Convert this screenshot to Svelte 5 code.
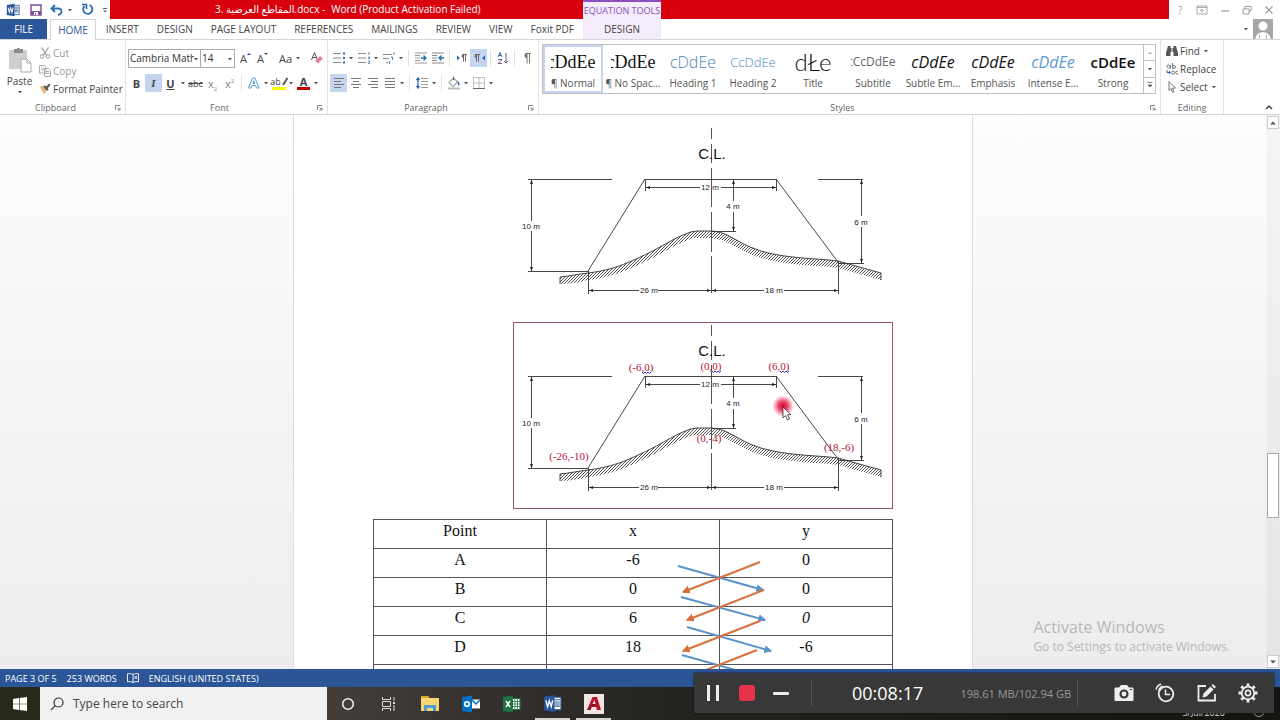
<script>
	let font = $state('Cambria Math');
	let size = $state('14');
	let query = $state('');

	const tabs = ['INSERT', 'DESIGN', 'PAGE LAYOUT', 'REFERENCES', 'MAILINGS', 'REVIEW', 'VIEW', 'Foxit PDF'];

	const styles = [
		{ name: '¶ Normal', sample: 'cDdEe', look: 'serif' },
		{ name: '¶ No Spac...', sample: 'cDdEe', look: 'serif' },
		{ name: 'Heading 1', sample: 'cDdEe', look: 'h1' },
		{ name: 'Heading 2', sample: 'CcDdEe', look: 'h2' },
		{ name: 'Title', sample: 'dŁe', look: 'huge' },
		{ name: 'Subtitle', sample: 'cCcDdEe', look: 'subtitle' },
		{ name: 'Subtle Em...', sample: 'cDdEe', look: 'subtle' },
		{ name: 'Emphasis', sample: 'cDdEe', look: 'emphasis' },
		{ name: 'Intense E...', sample: 'cDdEe', look: 'intense' },
		{ name: 'Strong', sample: 'cDdEe', look: 'strong' }
	];
	let picked = $state(0);

	const points = [
		{ name: 'A', x: '-6', y: '0' },
		{ name: 'B', x: '0', y: '0' },
		{ name: 'C', x: '6', y: '0', slanted: true },
		{ name: 'D', x: '18', y: '-6' },
		{ name: 'E', x: '0', y: '-4' }
	];

	const coords = [
		{ text: '(-6,0)', x: 128, y: 49, wavy: true },
		{ text: '(0,0)', x: 198, y: 48, wavy: true },
		{ text: '(6,0)', x: 266, y: 48, wavy: true },
		{ text: '(-26,-10)', x: 56, y: 138 },
		{ text: '(18,-6)', x: 326, y: 129 },
		{ text: '(0,-4)', x: 196, y: 120 }
	];

	// cross multiplication arrows, over the table
	const down = [[305, 47, 390, 71], [308, 78, 392, 101], [314, 108, 398, 132], [309, 136, 394, 160]];
	const up = [[387, 43, 310, 73], [391, 71, 314, 101], [387, 102, 310, 132], [384, 131, 310, 160]];

	const ground = 'C57 151 66 149 75 148 C92 146 104 142 114 138 C128 132 138 127 147 122 C156 117 165 112 170 110 Q178 106 184 106 L199 106 C206 107 210 108 214 110 C222 114 230 119 237 122 Q249 127 260 129 Q270 131 280 132 C296 134 310 134 325 136 Q346 142 368 148';
	const band = 'M47 152 ' + ground + ' L368 155 Q346 149 325 143 C310 141 296 141 280 139 Q270 138 260 136 Q249 134 237 129 C230 126 222 121 214 117 C210 115 206 114 199 113 L184 113 Q178 113 170 117 C165 119 156 124 147 129 C138 134 128 139 114 145 C104 149 92 153 75 155 Q60 159 47 159 Z';
</script>

{#snippet caret()}
	<svg class="caret" viewBox="0 0 8 6" width="8" height="6"><path d="M2 2h4L4 4.4z" fill="#555" /></svg>
{/snippet}

{#snippet launcher()}
	<button class="launcher" aria-label="More options">
		<svg viewBox="0 0 6 6" width="6" height="6"><path d="M.5 5V.5H5M2.5 2.5l2 2M5 2.5V5H2.5" fill="none" stroke="#666" stroke-width=".8" /></svg>
	</button>
{/snippet}

{#snippet lines(d)}
	<svg viewBox="0 0 12 12" width="12" height="12"><path {d} stroke="#777" fill="none" /></svg>
{/snippet}

{#snippet wordLogo(dim)}
	<svg viewBox="0 0 18 18" width={dim} height={dim}>
		<path d="M9 3h8v12H9z" fill="#fff" stroke="#2b579a" />
		<path d="M11 5.5h5M11 7.5h5M11 9.5h5M11 11.5h5" stroke="#2b579a" />
		<path d="M1 2.5L11 1v16L1 15.500z" fill="#2b579a" />
		<path d="M2.800 6l1.500 6L6 6.500 7.700 12l1.500-6" fill="none" stroke="#fff" stroke-width="1.300" />
	</svg>
{/snippet}

{#snippet section()}
	<path d={band} fill="url(#hatch)" />
	<path class="ink" d={'M47 159V152 ' + ground + 'V155'} />
	<path class="axis" d="M198.500 3V14M198.500 19V38M198.500 43V82M198.500 87V127M198.500 131V168" />
	<path class="ink" d="M132 54.500H263M132 54L75 146M263 54L325 137M15 54.500H99M305 54.500H350M15 146.500H75M325 138.500H351M198 106.500H223" />
	<path class="ink" d="M132.500 54V66M263.500 54V66M75.500 146V169M325.500 137V169" />
	<path class="ink" d="M133 62.500H187M208 62.500H263M220.500 55V76M220.500 87V106M18.500 55V96M18.500 106V146M348.500 55V91M348.500 102V138M76 165.500H126M145 165.500H251M271 165.500H325" />
	<path class="tip" d="M133 62.500l4-1.500v3zM263 62.500l-4-1.500v3zM220.500 55l-1.500 4h3zM220.500 106l-1.500-4h3zM18.500 55l-1.500 4h3zM18.500 146l-1.500-4h3zM348.500 55l-1.500 4h3zM348.500 138l-1.500-4h3zM76 165.500l4-1.500v3zM325 165.500l-4-1.500v3zM198 165.500l-4-1.500v3zM199 165.500l4-1.500v3z" />
	<text class="cl" x="199" y="34">C.L.</text>
	<g class="dim">
		<text x="197" y="65">12 m</text>
		<text x="220" y="84">4 m</text>
		<text x="18" y="104">10 m</text>
		<text x="348" y="100">6 m</text>
		<text x="136" y="168">26 m</text>
		<text x="261" y="168">18 m</text>
	</g>
{/snippet}

<div class="app">
	<header class="titlebar">
		<div class="quick">
			<span class="slot">{@render wordLogo(14)}</span>
			<button class="slot" aria-label="Save">
				<svg viewBox="0 0 12 12" width="12" height="12"><path d="M1 1h10v10H1z" fill="#fff" stroke="#80519f" stroke-width="1.500" /><path d="M1 7h10v4H1z" fill="#80519f" /><path d="M4 8h4v3H4z" fill="#fff" /><path d="M5 9h1v2H5z" fill="#80519f" /></svg>
			</button>
			<button class="slot wide" aria-label="Undo">
				<svg viewBox="0 0 14 12" width="14" height="12"><path d="M5 1L1.500 4.500 5 8M2 4.500h6c5 0 4.500 6 0 6.500" fill="none" stroke="#2b6cb0" stroke-width="1.800" /></svg>
				{@render caret()}
			</button>
			<button class="slot" aria-label="Repeat">
				<svg viewBox="0 0 13 13" width="13" height="13"><path d="M3.500 3A4.600 4.600 0 1 0 8.500 2" fill="none" stroke="#2b6cb0" stroke-width="1.800" /><path d="M1 1.500h4.500V6" fill="none" stroke="#2b6cb0" stroke-width="1.600" /></svg>
			</button>
			<button class="slot end" aria-label="Customize toolbar">
				<svg viewBox="0 0 8 8" width="8" height="8"><path d="M2 2h4v1H2zM2 4.500h4L4 6.500z" fill="#666" /></svg>
			</button>
		</div>
		<div class="title"><span>3. <bdi>المقاطع العرضية</bdi>.docx -</span><span>Word (Product Activation Failed)</span></div>
		<div class="tools-title">EQUATION TOOLS</div>
		<div class="title-rest"></div>
		<div class="window-buttons">
			<button aria-label="Help">?</button>
			<button aria-label="Ribbon display options"><svg viewBox="0 0 12 10" width="12" height="10"><path d="M1 1h10v8H1zM1 2.500h10M6 8V4M4 6l2-2 2 2" fill="none" stroke="#aaa" /></svg></button>
			<button aria-label="Minimize"><svg viewBox="0 0 10 10" width="10" height="10"><path d="M1 6h8" stroke="#999" stroke-width="1.200" /></svg></button>
			<button aria-label="Restore"><svg viewBox="0 0 10 10" width="10" height="10"><path d="M1 4h6v5H1zM3 4V1.500h6V6H7" fill="none" stroke="#999" /></svg></button>
			<button aria-label="Close"><svg viewBox="0 0 10 10" width="10" height="10"><path d="M1.500 1.500l7 7M8.500 1.500l-7 7" stroke="#999" stroke-width="1.200" /></svg></button>
		</div>
	</header>

	<nav class="tabs">
		<div class="tab-list">
			<button class="file">FILE</button>
			<button class="home">HOME</button>
			{#each tabs as tab}
				<button class="tab">{tab}</button>
			{/each}
		</div>
		<button class="tools-tab">DESIGN</button>
		<div class="account">
			{@render caret()}
			<svg viewBox="0 0 20 20" width="20" height="20"><path d="M0 0h20v20H0z" fill="#a6a6a6" /><circle cx="10" cy="7" r="4.500" fill="#fff" /><path d="M2.500 20c0-9 15-9 15 0z" fill="#fff" /><path d="M6.500 20v-4M13.500 20v-4" stroke="#a6a6a6" stroke-width=".8" /></svg>
		</div>
	</nav>

	<section class="ribbon">
		<div class="group clipboard">
			<div class="clip-body">
				<button class="paste">
					<svg viewBox="0 0 24 26" width="24" height="26"><path d="M1 3h18v19H1z" fill="#cfcfcf" /><path d="M6 2h2.500a2 2 0 0 1 3.500 0H15v4H6z" fill="#8c8c8c" /><path d="M13 12h6l4 4v9H13z" fill="#fff" stroke="#aaa" /><path d="M19 12v4h4" fill="none" stroke="#aaa" /></svg>
					<span>Paste</span>
					{@render caret()}
				</button>
				<div class="clip-list">
					<button class="off"><svg viewBox="0 0 12 12" width="12" height="12"><path d="M2.500.5l5 7.500M9.500.5l-5 7.500" stroke="#999" stroke-width="1.300" /><circle cx="3" cy="9.500" r="1.800" fill="none" stroke="#999" /><circle cx="9" cy="9.500" r="1.800" fill="none" stroke="#999" /></svg>Cut</button>
					<button class="off"><svg viewBox="0 0 12 12" width="12" height="12"><path d="M.5.5h5l1.500 2V8H.5zM5.500 3.500h4l2 2v6h-6z" fill="#fff" stroke="#aaa" /><path d="M2 3h3M2 5h3M7 6.500h3M7 8.500h3" stroke="#aaa" /></svg>Copy</button>
					<button><svg viewBox="0 0 12 12" width="12" height="12"><path d="M1 4l4-2 3 5-3 4z" fill="#e8b073" /><path d="M4.500 3.500L8 8l1.500-1.500-3-4z" fill="#555" /><path d="M7 4l3-3.500 1.500 1.500-3 3.500z" fill="#555" /></svg>Format Painter</button>
				</div>
			</div>
			<footer>Clipboard{@render launcher()}</footer>
		</div>

		<div class="group font">
			<div class="row">
				<label class="combo name"><select bind:value={font} aria-label="Font"><option>Cambria Math</option><option>Calibri</option></select>{@render caret()}</label>
				<label class="combo size"><select bind:value={size} aria-label="Font size"><option>12</option><option>14</option></select>{@render caret()}</label>
				<button class="tool grow" aria-label="Grow font">A<svg viewBox="0 0 4 4" width="4" height="4"><path d="M0 3l2-2 2 2z" fill="#2b579a" /></svg></button>
				<button class="tool grow" aria-label="Shrink font">A<svg viewBox="0 0 4 4" width="4" height="4"><path d="M0 1l2 2 2-2z" fill="#2b579a" /></svg></button>
				<i class="sep"></i>
				<button class="tool">Aa</button>{@render caret()}
				<i class="sep"></i>
				<button class="tool" aria-label="Clear formatting"><svg viewBox="0 0 14 14" width="14" height="14"><path d="M1.500 9L4.500 1.500 7.500 9M2.500 6.500h4" fill="none" stroke="#555" /><path d="M5 10l5-5 3 2.500-5 5z" fill="#e5839b" /></svg></button>
			</div>
			<div class="row">
				<button class="tool"><b>B</b></button>
				<button class="tool on"><b class="it">I</b></button>
				<button class="tool"><b class="un">U</b></button>{@render caret()}
				<button class="tool strike">abc</button>
				<button class="tool pale"><span>x<sub>2</sub></span></button>
				<button class="tool pale"><span>x<sup>2</sup></span></button>
				<i class="sep"></i>
				<button class="tool" aria-label="Text effects"><svg viewBox="0 0 14 14" width="14" height="14"><path d="M1.500 12L5.500 2h2.500l4 10H9.500l-1-2.500h-3.500L4 12zM5.800 7.500h2L6.800 4.700z" fill="#fff" stroke="#5b9bd5" /></svg></button>{@render caret()}
				<button class="tool swatch yellow" aria-label="Highlight"><span>ab</span><svg viewBox="0 0 7 10" width="7" height="10"><path d="M6.500 1L2 8" stroke="#555" stroke-width="2" /></svg></button>{@render caret()}
				<button class="tool swatch red" aria-label="Font colour"><b>A</b></button>{@render caret()}
			</div>
			<footer>Font{@render launcher()}</footer>
		</div>

		<div class="group paragraph">
			<div class="row">
				<button class="tool" aria-label="Bullets"><svg viewBox="0 0 12 12" width="12" height="12"><path d="M0 1.500h8M0 6h8M0 10.500h8" stroke="#888" /><path d="M10 .5h2v2h-2zM10 5h2v2h-2zM10 9.500h2v2h-2z" fill="#2b6cb0" /></svg></button>{@render caret()}
				<button class="tool" aria-label="Numbering"><svg viewBox="0 0 12 12" width="12" height="12"><path d="M0 1.500h8M0 6h8M0 10.500h8" stroke="#888" /><path d="M11 0v3M10 5h1.500v1.500H10M10 9h1.500v2.500H10" fill="none" stroke="#2b6cb0" stroke-width=".8" /></svg></button>{@render caret()}
				<button class="tool" aria-label="Multilevel list"><svg viewBox="0 0 12 12" width="12" height="12"><path d="M0 2.500h9M0 6.500h6M3 10.500h2" stroke="#888" /><path d="M11 0v3M8 5h1.500v3M6.500 9v3" fill="none" stroke="#2b6cb0" stroke-width=".8" /></svg></button>{@render caret()}
				<i class="sep"></i>
				<button class="tool" aria-label="Decrease indent"><svg viewBox="0 0 12 12" width="12" height="12"><path d="M0 1h12M0 11h12M0 3.500h5M0 6h5M0 8.500h5" stroke="#999" /><path d="M6 6h5M8.500 3.500L11 6 8.500 8.500" fill="none" stroke="#2b6cb0" stroke-width="1.300" /></svg></button>
				<button class="tool" aria-label="Increase indent"><svg viewBox="0 0 12 12" width="12" height="12"><path d="M0 1h12M0 11h12M0 3.500h5M0 6h5M0 8.500h5" stroke="#888" /><path d="M7 6h5M9.500 3.500L7 6l2.500 2.500" fill="none" stroke="#2b6cb0" stroke-width="1.300" /></svg></button>
				<i class="sep"></i>
				<button class="tool" aria-label="Left to right"><svg viewBox="0 0 12 12" width="12" height="12"><path d="M1 3.500l3 2.500-3 2.500z" fill="#2b6cb0" /><path d="M7 2.500h4M7.500 2.500v7M9.500 2.500v7" stroke="#666" fill="none" /><path d="M7.500 2a2 2 0 0 0 0 4z" fill="#666" /></svg></button>
				<button class="tool on" aria-label="Right to left"><svg viewBox="0 0 12 12" width="12" height="12"><path d="M12 3.500L9 6l3 2.500z" fill="#2b6cb0" /><path d="M3 2.500h4M3.500 2.500v7M5.500 2.500v7" stroke="#666" fill="none" /><path d="M3.500 2a2 2 0 0 0 0 4z" fill="#666" /></svg></button>
				<i class="sep"></i>
				<button class="tool" aria-label="Sort"><svg viewBox="0 0 12 12" width="12" height="12"><path d="M1 5L3 .5 5 5M1.700 3.500h2.600" fill="none" stroke="#2b6cb0" /><path d="M1 7.500h4L1 11.500h4" fill="none" stroke="#80519f" /><path d="M9 1v10M7 9l2 2 2-2" fill="none" stroke="#666" /></svg></button>
				<i class="sep"></i>
				<button class="tool" aria-label="Show marks"><svg viewBox="0 0 12 12" width="12" height="12"><path d="M4.500 1.500H10M6 1.500v10M8.500 1.500v10" stroke="#777" fill="none" /><path d="M6 1a2.500 2.500 0 0 0 0 5z" fill="#777" /></svg></button>
			</div>
			<div class="row">
				<button class="tool on" aria-label="Align left">{@render lines('M1 1.500h10M1 4.500h7M1 7.500h10M1 10.500h7')}</button>
				<button class="tool" aria-label="Center">{@render lines('M1 1.500h10M3 4.500h6M1 7.500h10M3 10.500h6')}</button>
				<button class="tool" aria-label="Align right">{@render lines('M1 1.500h10M4 4.500h7M1 7.500h10M4 10.500h7')}</button>
				<button class="tool" aria-label="Justify">{@render lines('M1 1.500h10M1 4.500h10M1 7.500h10M1 10.500h10')}</button>{@render caret()}
				<i class="sep"></i>
				<button class="tool" aria-label="Line spacing"><svg viewBox="0 0 12 12" width="12" height="12"><path d="M5 1.500h7M5 4.500h7M5 7.500h7M5 10.500h7" stroke="#999" /><path d="M2 1v10M.5 3L2 1l1.500 2M.5 9L2 11l1.500-2" stroke="#2b6cb0" stroke-width="1.300" fill="none" /></svg></button>{@render caret()}
				<i class="sep"></i>
				<button class="tool" aria-label="Shading"><svg viewBox="0 0 14 14" width="14" height="14"><path d="M2 6.500L6.500 2l4 4L6 10.500z" fill="#fff" stroke="#666" /><path d="M6.500 4V.5" stroke="#666" /><path d="M10.500 5c2 1 2.500 3 1.500 5-1-1-1.500-2.500-1.500-5z" fill="#2b6cb0" /><path d="M1 11.500h12v2H1z" fill="#bbb" /></svg></button>{@render caret()}
				<button class="tool" aria-label="Borders"><svg viewBox="0 0 12 12" width="12" height="12"><path d="M.5.5h11v11H.5zM6 .5v11M.5 6h11" fill="none" stroke="#888" stroke-dasharray="1 1" /><path d="M0 11.500h12" stroke="#666" /></svg></button>{@render caret()}
			</div>
			<footer>Paragraph{@render launcher()}</footer>
		</div>

		<div class="group styles">
			<div class="gallery">
				{#each styles as style, i}
					<button class="style" class:picked={picked === i} onclick={() => (picked = i)}>
						<span class="sample {style.look}">{style.sample}</span>
						<span class="style-name">{style.name}</span>
					</button>
				{/each}
				<div class="gallery-scroll">
					<button aria-label="Previous styles"><svg viewBox="0 0 8 6" width="8" height="6"><path d="M2 4h4L4 2z" fill="#aaa" /></svg></button>
					<button aria-label="Next styles">{@render caret()}</button>
					<button aria-label="All styles"><svg viewBox="0 0 8 8" width="8" height="8"><path d="M1.500 1.500h5M2 4l2 2 2-2z" fill="#555" stroke="#666" stroke-width=".8" /></svg></button>
				</div>
			</div>
			<footer>Styles{@render launcher()}</footer>
		</div>

		<div class="group editing">
			<div class="edit-list">
				<button><svg viewBox="0 0 12 12" width="12" height="12"><path d="M2 1h2.500v2H7.500V1H10l2 7v3H7.500V7h-3v4H0V8z" fill="#555" /><path d="M6 3v4" stroke="#fff" /></svg>Find{@render caret()}</button>
				<button><svg viewBox="0 0 12 12" width="12" height="12"><circle cx="2.500" cy="3.500" r="1.500" fill="none" stroke="#777" /><path d="M4.500 2v3.500M6.500 0v5.500" stroke="#777" /><circle cx="8" cy="4" r="1.500" fill="none" stroke="#777" /><path d="M1 7v2.500h3M3 8l1.500 1.500L3 11" fill="none" stroke="#2b6cb0" /><circle cx="7" cy="9.500" r="1.500" fill="none" stroke="#777" /><path d="M12 8.300a1.500 1.500 0 1 0 0 2.400" fill="none" stroke="#777" /></svg>Replace</button>
				<button><svg viewBox="0 0 12 12" width="12" height="12"><path d="M3 .5v9l2-2 1.500 4 1.500-.6-1.500-3.800H9.500z" fill="#fff" stroke="#777" /></svg>Select{@render caret()}</button>
			</div>
			<footer>Editing</footer>
		</div>
		<button class="collapse" aria-label="Collapse the ribbon"><svg viewBox="0 0 8 6" width="8" height="6"><path d="M1 5l3-3 3 3" fill="none" stroke="#444" stroke-width="1.500" /></svg></button>
	</section>

	<main class="workspace">
		<div class="desk">
			<article class="page">
				<svg class="figure" viewBox="0 0 380 187" role="img" aria-label="Cross section">
					<defs>
						<pattern id="hatch" width="3" height="3" patternUnits="userSpaceOnUse"><path d="M-1 4L4-1M-1 1L1-1M2 4L4 2" stroke="#222" stroke-width=".8" /></pattern>
					</defs>
					{@render section()}
				</svg>
				<div class="framed">
					<svg class="figure" viewBox="0 0 380 187" role="img" aria-label="Cross section with coordinates">
						{@render section()}
						{#each coords as c}
							<text class="coord" x={c.x} y={c.y}>{c.text}</text>
							{#if c.wavy}
								<path d="M{c.x + 1} {c.y + 1}l1.500 1.500 1.500-1.500 1.500 1.500 1.500-1.500 1.500 1.500 1.500-1.500" fill="none" stroke="#33c" />
							{/if}
						{/each}
					</svg>
					<svg class="pointer" viewBox="0 0 24 32" width="24" height="32">
						<defs>
							<radialGradient id="glow"><stop offset="0" stop-color="#d8002f" /><stop offset=".45" stop-color="#e4123f" stop-opacity=".75" /><stop offset="1" stop-color="#f04070" stop-opacity="0" /></radialGradient>
						</defs>
						<circle cx="11" cy="11" r="11" fill="url(#glow)" />
						<path d="M11 12v11l2.500-2.500 2 4.500 2-1-2-4.300H19z" fill="#fff" stroke="#333" stroke-width=".8" />
					</svg>
				</div>
				<div class="table-wrap">
					<table>
						<thead><tr><th>Point</th><th>x</th><th>y</th></tr></thead>
						<tbody>
							{#each points as p}
								<tr><td>{p.name}</td><td>{p.x}</td><td class:slanted={p.slanted}>{p.y}</td></tr>
							{/each}
						</tbody>
					</table>
					<svg class="arrows" viewBox="0 0 520 175" width="520" height="175">
						<defs>
							<marker id="blue" viewBox="0 0 6 6" refX="5" refY="3" markerWidth="4" markerHeight="4" orient="auto"><path d="M0 0l6 3-6 3z" fill="#5b93c9" /></marker>
							<marker id="orange" viewBox="0 0 6 6" refX="5" refY="3" markerWidth="4" markerHeight="4" orient="auto"><path d="M0 0l6 3-6 3z" fill="#d9703a" /></marker>
						</defs>
						{#each down as [x1, y1, x2, y2]}
							<line {x1} {y1} {x2} {y2} stroke="#5b93c9" stroke-width="2" marker-end="url(#blue)" />
						{/each}
						{#each up as [x1, y1, x2, y2]}
							<line {x1} {y1} {x2} {y2} stroke="#d9703a" stroke-width="2" marker-end="url(#orange)" />
						{/each}
					</svg>
				</div>
			</article>
			<div class="watermark">
				<p class="big">Activate Windows</p>
				<p>Go to Settings to activate Windows.</p>
			</div>
		</div>
		<div class="scrollbar">
			<button aria-label="Scroll up"><svg viewBox="0 0 8 6" width="8" height="6"><path d="M1 4.500h6L4 1.500z" fill="#555" /></svg></button>
			<div class="above"></div>
			<div class="thumb"></div>
			<div class="below"></div>
			<button aria-label="Scroll down"><svg viewBox="0 0 8 6" width="8" height="6"><path d="M1 1.500h6L4 4.500z" fill="#555" /></svg></button>
		</div>
	</main>

	<div class="status">
		<span>PAGE 3 OF 5</span>
		<span>253 WORDS</span>
		<svg viewBox="0 0 12 10" width="12" height="10"><path d="M6 1.500C4 .5 2.500.5.500.8v8c2-.3 3.500-.3 5.500.7 2-1 3.500-1 5.500-.7v-8C9.500.5 8 .5 6 1.500zM6 1.500v8M7.500 3l2.500 3M10 3L7.500 6" fill="none" stroke="#fff" stroke-width=".9" /></svg>
		<span>ENGLISH (UNITED STATES)</span>
	</div>

	<div class="taskbar">
		<button class="start" aria-label="Start"><svg viewBox="0 0 14 14" width="14" height="14"><path d="M0 2l6-.9v5.600H0zM6.600 1L14 0v6.700H6.600zM0 7.300h6v5.600L0 12zM6.600 7.300H14V14l-7.400-1z" fill="#fff" /></svg></button>
		<label class="search">
			<svg viewBox="0 0 14 14" width="14" height="14"><circle cx="8.500" cy="5.500" r="4.500" fill="none" stroke="#333" stroke-width="1.200" /><path d="M5.300 8.700L.8 13.200" stroke="#333" stroke-width="1.200" /></svg>
			<input bind:value={query} placeholder="Type here to search" aria-label="Search" />
		</label>
		<button class="task" aria-label="Cortana"><svg viewBox="0 0 14 14" width="14" height="14"><circle cx="7" cy="7" r="5.300" fill="none" stroke="#eee" stroke-width="1.600" /></svg></button>
		<button class="task" aria-label="Task view"><svg viewBox="0 0 16 14" width="16" height="14"><path d="M1.500 0v2.500h8V0M1.500 14v-2.500h8V14M1.500 4.500h8v5h-8zM13 0v4M13 8v6" fill="none" stroke="#ddd" /><path d="M12 5h2v2h-2z" fill="#ddd" /></svg></button>
		<button class="task" aria-label="File Explorer"><svg viewBox="0 0 18 16" width="18" height="16"><path d="M0 0h7l1.500 2H18v13H0z" fill="#f7d774" /><path d="M0 0h7l1.500 2H0z" fill="#d9a428" /><path d="M3 15V9h12v6h-3v-3H6v3z" fill="#4b9cd3" /></svg></button>
		<button class="task" aria-label="Outlook"><svg viewBox="0 0 18 18" width="18" height="18"><path d="M9 4.500h9v9H9z" fill="#fff" /><path d="M10 5l4 4 4-4" fill="none" stroke="#0072c6" stroke-width="1.500" /><path d="M0 2l10-1.500v17L0 16z" fill="#0072c6" /><circle cx="5" cy="9" r="2.300" fill="none" stroke="#fff" stroke-width="1.600" /></svg></button>
		<button class="task" aria-label="Excel"><svg viewBox="0 0 18 18" width="18" height="18"><path d="M9 3.500h8v11H9z" fill="#fff" stroke="#217346" /><path d="M12 4v10M14.500 4v10M9 6.500h8M9 9h8M9 11.500h8" stroke="#217346" stroke-width=".8" /><path d="M0 2l10-1.500v17L0 16z" fill="#217346" /><path d="M3 6l4 6M7 6l-4 6" stroke="#fff" stroke-width="1.500" /></svg></button>
		<button class="task open" aria-label="Word">{@render wordLogo(19)}</button>
		<button class="task open" aria-label="AutoCAD"><svg viewBox="0 0 20 20" width="20" height="20"><path d="M0 0h20v20H0z" fill="#f6e4e2" /><path d="M3 16L8.500 3h4.500l4 13h-4l-.8-3H7.500L6.500 16zM8.500 10h3l-1-4z" fill="#b3132b" /><path d="M3 16l5.500-6h3l-4 3-1 3z" fill="#7d0d20" /></svg></button>
		<span class="date">5/Jul/2020</span>
		<svg class="notice" viewBox="0 0 14 14" width="14" height="14"><circle cx="7" cy="7" r="5.500" fill="none" stroke="#999" /></svg>
	</div>

	<div class="recorder">
		<button aria-label="Pause"><svg viewBox="0 0 16 16" width="16" height="16"><path d="M2 0h3v16H2zM11 0h3v16h-3z" fill="#eee" /></svg></button>
		<button aria-label="Stop"><svg viewBox="0 0 16 16" width="16" height="16"><rect width="16" height="16" rx="3" fill="#e6324b" /></svg></button>
		<button aria-label="Minimise"><svg viewBox="0 0 18 16" width="18" height="16"><rect x="1" y="7" width="16" height="3" rx="1" fill="#eee" /></svg></button>
		<i class="bar"></i>
		<time>00:08:17</time>
		<span class="disk">198.61 MB/102.94 GB</span>
		<i class="bar last"></i>
		<div class="actions">
			<button aria-label="Screenshot"><svg viewBox="0 0 20 16" width="20" height="16"><path d="M1.500 2.500H5L7 0h6l2 2.500h3.500q1 0 1 1V15q0 1-1 1h-17q-1 0-1-1V3.500q0-1 1-1z" fill="#eee" /><circle cx="10" cy="9" r="3.500" fill="none" stroke="#383838" stroke-width="2.200" /><path d="M16 4.500h2" stroke="#383838" /></svg></button>
			<button aria-label="Schedule"><svg viewBox="0 0 20 20" width="20" height="20"><circle cx="11" cy="11" r="7.300" fill="none" stroke="#eee" stroke-width="1.800" /><path d="M10.500 6.500v5h4.500M1 6.500Q2 2.500 6 1M3.500 7.500Q4.500 4.500 7.500 3" fill="none" stroke="#eee" stroke-width="1.500" /></svg></button>
			<button aria-label="Annotate"><svg viewBox="0 0 20 18" width="20" height="18"><path d="M9 2H1.500v14.500h16.500V10" fill="none" stroke="#eee" stroke-width="1.800" /><path d="M5.500 13.500l1-4 7-7 3 3-7 7zM14.500 1.500L16 0l3 3-1.500 1.500z" fill="#eee" /></svg></button>
			<button aria-label="Settings"><svg viewBox="0 0 20 20" width="20" height="20"><circle cx="10" cy="10" r="6.300" fill="none" stroke="#eee" stroke-width="1.800" /><circle cx="10" cy="10" r="2.600" fill="none" stroke="#eee" stroke-width="1.600" /><path d="M10 .5v3M10 16.500v3M.5 10h3M16.500 10h3M3.300 3.300l2 2M14.700 14.700l2 2M3.300 16.700l2-2M14.700 5.300l2-2" stroke="#eee" stroke-width="2.800" /></svg></button>
		</div>
	</div>
</div>

<style>
	:global(body) {
		margin: 0;
	}

	.app {
		position: relative;
		display: flex;
		flex-direction: column;
		height: 100vh;
		overflow: hidden;
		background: #fff;
		color: #444;
		font-family: 'Open Sans', 'Noto Sans', 'DejaVu Sans', sans-serif;
		font-size: 10px;
	}

	button, select, input {
		font: inherit;
		color: inherit;
		background: none;
		border: none;
		padding: 0;
		margin: 0;
	}

	button {
		display: flex;
		align-items: center;
		justify-content: center;
		white-space: nowrap;
	}

	svg {
		display: block;
		flex: none;
	}

	/* title bar */
	.titlebar {
		display: flex;
		height: 19px;
		flex: none;
	}

	.quick {
		display: flex;
		align-items: center;
		width: 110px;
		flex: none;
		padding-left: 6px;
		box-sizing: border-box;
	}

	.slot {
		width: 18px;
		margin-right: 4px;
	}

	.slot.wide {
		width: 26px;
		gap: 2px;
	}

	.slot.end {
		margin: 0 0 0 auto;
		width: 10px;
	}

	.title {
		display: flex;
		gap: 6px;
		box-sizing: border-box;
		width: 473px;
		padding-left: 105px;
		line-height: 19px;
		color: #fff;
		background: #d9000d;
		white-space: nowrap;
	}

	.title-rest {
		flex: 1;
		background: #d9000d;
	}

	.tools-title {
		box-sizing: border-box;
		width: 78px;
		border-top: 2px solid #8a4fc0;
		background: #f4ecfa;
		color: #8a4fc0;
		font-size: 9px;
		line-height: 17px;
		text-align: center;
		white-space: nowrap;
	}

	.window-buttons {
		display: flex;
		width: 111px;
		color: #999;
	}

	.window-buttons button {
		flex: 1;
	}

	/* tabs */
	.tabs {
		display: flex;
		height: 20px;
		flex: none;
		border-bottom: 1px solid #d5d5d5;
	}

	.tab-list {
		display: flex;
		width: 583px;
		flex: none;
	}

	.file {
		width: 48px;
		background: #2b579a;
		color: #fff;
	}

	.home {
		width: 46px;
		margin: 0 1px -1px 3px;
		border: 1px solid #d5d5d5;
		border-bottom: none;
		background: #fff;
		color: #2b579a;
	}

	.tab {
		padding: 0 9px;
	}

	.tools-tab {
		width: 78px;
		background: #f4ecfa;
	}

	.account {
		display: flex;
		align-items: center;
		gap: 3px;
		margin-left: auto;
		padding-right: 7px;
	}

	/* ribbon */
	.ribbon {
		display: flex;
		height: 74px;
		flex: none;
		border-bottom: 1px solid #d5d5d5;
	}

	.group {
		position: relative;
		display: flex;
		flex-direction: column;
		gap: 7px;
		box-sizing: border-box;
		padding: 9px 2px 0;
		border-right: 1px solid #e4e4e4;
	}

	.group footer {
		position: absolute;
		left: 0;
		right: 0;
		bottom: 0;
		padding-right: 14px;
		font-size: 9px;
		line-height: 13px;
		text-align: center;
		color: #666;
	}

	.launcher {
		position: absolute;
		right: 4px;
		bottom: 3px;
	}

	.row {
		display: flex;
		align-items: center;
		height: 18px;
	}

	.tool {
		width: 17px;
		height: 18px;
		flex: none;
		font-size: 11px;
	}

	.on {
		background: #c5d5ef;
	}

	.sep {
		width: 1px;
		height: 16px;
		margin: 0 3px;
		background: #e1e1e1;
	}

	.clipboard {
		width: 126px;
		padding: 4px 2px 0 6px;
	}

	.clip-body {
		display: flex;
		gap: 6px;
	}

	.paste {
		flex-direction: column;
		width: 27px;
		gap: 1px;
	}

	.clip-list, .edit-list {
		display: flex;
		flex-direction: column;
		align-items: flex-start;
	}

	.clip-list button, .edit-list button {
		height: 18px;
		gap: 2px;
	}

	.off {
		color: #999;
	}

	.font {
		width: 202px;
	}

	.combo {
		position: relative;
		box-sizing: border-box;
		height: 19px;
		border: 1px solid #ababab;
		flex: none;
	}

	.combo select {
		appearance: none;
		width: 100%;
		height: 17px;
		padding: 0 6px 0 1px;
		overflow: hidden;
		color: #333;
	}

	.combo .caret {
		position: absolute;
		right: 0;
		top: 6px;
	}

	.combo.name {
		width: 73px;
	}

	.combo.size {
		width: 35px;
		margin: 0 2px 0 -1px;
	}

	.grow svg {
		align-self: flex-start;
		margin-top: 3px;
	}

	.it {
		font-family: 'Liberation Serif', serif;
		font-style: italic;
	}

	.un {
		text-decoration: underline;
	}

	.strike {
		font-size: 9px;
		text-decoration: line-through;
	}

	.pale {
		color: #888;
	}

	sub, sup {
		font-size: 6px;
		line-height: 0;
	}

	.swatch {
		box-sizing: border-box;
		height: 14px;
		border-bottom: 3px solid;
		color: #444;
	}

	.swatch span {
		font-size: 9px;
	}

	.yellow {
		width: 14px;
		margin: 0 1px 0 2px;
		border-color: #ff0;
	}

	.red {
		border-color: #c00000;
		margin: 0 2px;
		width: 13px;
	}

	.paragraph {
		width: 211px;
	}

	.styles {
		flex: 1;
		min-width: 0;
		padding: 4px 4px 0 3px;
	}

	.gallery {
		display: flex;
		box-sizing: border-box;
		height: 50px;
		border: 1px solid #c0c0c0;
		overflow: hidden;
	}

	.style {
		flex: 1;
		min-width: 0;
		flex-direction: column;
		border: 2px solid transparent;
	}

	.style.picked {
		border-color: #c5d5ef;
	}

	.sample {
		display: flex;
		align-items: center;
		justify-content: center;
		height: 28px;
		font-size: 16px;
		line-height: 28px;
		color: #111;
	}

	.style-name {
		line-height: 14px;
		color: #555;
	}

	/* the gallery cuts the first letter of the wider samples */
	.sample.serif, .sample.subtitle {
		width: 45px;
		justify-content: flex-end;
		overflow: hidden;
	}

	.sample.serif {
		font-family: 'Liberation Serif', serif;
		font-size: 18px;
	}

	.sample.h1 {
		color: #4a86bd;
		font-weight: 300;
	}

	.sample.h2 {
		color: #4a86bd;
		font-size: 13px;
		font-weight: 300;
	}

	.sample.huge {
		font-family: Lato, sans-serif;
		font-size: 24px;
		font-weight: 300;
	}

	.sample.subtitle {
		color: #666;
		font-size: 12px;
	}

	.sample.subtle, .sample.emphasis, .sample.intense {
		font-style: italic;
	}

	.sample.intense {
		color: #5b9bd5;
	}

	.sample.strong {
		font-size: 15px;
		font-weight: 600;
	}

	.gallery-scroll {
		display: flex;
		flex-direction: column;
		width: 11px;
		border-left: 1px solid #c0c0c0;
	}

	.gallery-scroll button {
		flex: 1;
	}

	.gallery-scroll button + button {
		border-top: 1px solid #c0c0c0;
	}

	.editing {
		width: 63px;
		padding: 2px 0 0 5px;
	}

	.editing footer {
		padding: 0;
	}

	.collapse {
		width: 56px;
		align-items: flex-end;
		justify-content: flex-end;
		padding: 0 7px 4px 0;
	}

	/* document */
	.workspace {
		display: flex;
		flex: 1;
		min-height: 0;
		background: linear-gradient(#fdfdfd, #ededed);
	}

	.desk {
		position: relative;
		display: flex;
		flex: 1;
		justify-content: center;
		overflow: hidden;
	}

	.page {
		display: flex;
		flex-direction: column;
		align-items: flex-end;
		gap: 10px;
		box-sizing: border-box;
		width: 680px;
		height: 900px;
		padding: 10px 79px 0;
		background: #fff;
		border: solid #dcdcdc;
		border-width: 0 1px;
	}

	.figure {
		width: 380px;
		height: 187px;
	}

	.framed {
		position: relative;
		outline: 1px solid #96586a;
		outline-offset: -1px;
	}

	.pointer {
		position: absolute;
		left: 259px;
		top: 73px;
	}

	.ink {
		fill: none;
		stroke: #333;
		stroke-width: 0.9;
	}

	.axis {
		stroke: #555;
	}

	.tip {
		fill: #222;
	}

	.cl {
		font: 15px 'Liberation Sans', sans-serif;
		text-anchor: middle;
		fill: #111;
	}

	.dim {
		font: 8px 'Liberation Sans', sans-serif;
		text-anchor: middle;
		fill: #222;
	}

	.coord {
		font: 11px 'Liberation Serif', serif;
		text-anchor: middle;
		fill: #b5123a;
	}

	.table-wrap {
		position: relative;
		width: 100%;
	}

	table {
		width: 100%;
		border-collapse: collapse;
		table-layout: fixed;
		font-family: 'Liberation Serif', serif;
		font-size: 16px;
		color: #111;
	}

	th, td {
		box-sizing: border-box;
		height: 29px;
		padding: 0 0 6px;
		border: 1px solid #555;
		font-weight: normal;
		line-height: 18px;
		text-align: center;
	}

	.slanted {
		font-style: italic;
	}

	.arrows {
		position: absolute;
		left: 0;
		top: 0;
	}

	.watermark {
		position: absolute;
		right: 36px;
		bottom: 13px;
		color: #b8b8b8;
		font-size: 12px;
	}

	.watermark p {
		margin: 0;
		line-height: 18px;
	}

	.watermark .big {
		font-size: 16px;
		line-height: 22px;
	}

	.scrollbar {
		display: flex;
		flex-direction: column;
		box-sizing: border-box;
		width: 14px;
		padding: 1px;
		background: rgba(0, 0, 0, 0.03);
	}

	.scrollbar button {
		height: 13px;
		border: 1px solid #ccc;
		background: #fff;
	}

	.above {
		flex: 324;
	}

	.thumb {
		height: 63px;
		border: 1px solid #ababab;
		background: #fff;
	}

	.below {
		flex: 137;
	}

	.status {
		display: flex;
		align-items: center;
		gap: 10px;
		height: 18px;
		flex: none;
		padding: 0 5px;
		background: #2b5597;
		color: #fff;
		font-size: 9px;
	}

	/* taskbar */
	.taskbar {
		display: flex;
		height: 33px;
		flex: none;
		background: linear-gradient(90deg, #262b1c 40px, #433e3a 327px, #23221f 680px, #14150f);
	}

	.start {
		width: 40px;
	}

	.search {
		display: flex;
		align-items: center;
		gap: 9px;
		box-sizing: border-box;
		width: 287px;
		padding-left: 10px;
		background: #f1f1f1;
	}

	.search input {
		flex: 1;
		font-size: 12px;
		color: #333;
	}

	.search input::placeholder {
		color: #444;
	}

	.task {
		width: 41px;
	}

	.open {
		box-sizing: border-box;
		padding-top: 2px;
		border-bottom: 2px solid #d8d3c8;
		margin: 0 3px;
		width: 35px;
	}

	.date {
		margin-left: auto;
		align-self: flex-end;
		color: #ddd;
		font-size: 9px;
		line-height: 15px;
	}

	.notice {
		align-self: flex-end;
		margin: 0 14px 2px 27px;
	}

	/* screen recorder */
	.recorder {
		position: absolute;
		right: 6px;
		bottom: 7px;
		display: flex;
		align-items: center;
		box-sizing: border-box;
		width: 580px;
		height: 40px;
		padding: 0 16px 0 2px;
		background: #383838;
		box-shadow: 0 0 2px #111;
	}

	.recorder button {
		width: 34px;
	}

	.bar {
		width: 1px;
		height: 26px;
		margin: 0 5px 0 13px;
		background: #555;
	}

	.bar.last {
		margin: 0 36px 0 6px;
	}

	time {
		width: 112px;
		padding-left: 35px;
		box-sizing: border-box;
		color: #fff;
		font-size: 18px;
	}

	.disk {
		flex: 1;
		text-align: right;
		color: #999;
		font-size: 11px;
		white-space: nowrap;
	}

	.actions {
		display: flex;
		align-items: center;
		justify-content: space-between;
		width: 144px;
	}

	.actions button {
		width: 20px;
	}
</style>
